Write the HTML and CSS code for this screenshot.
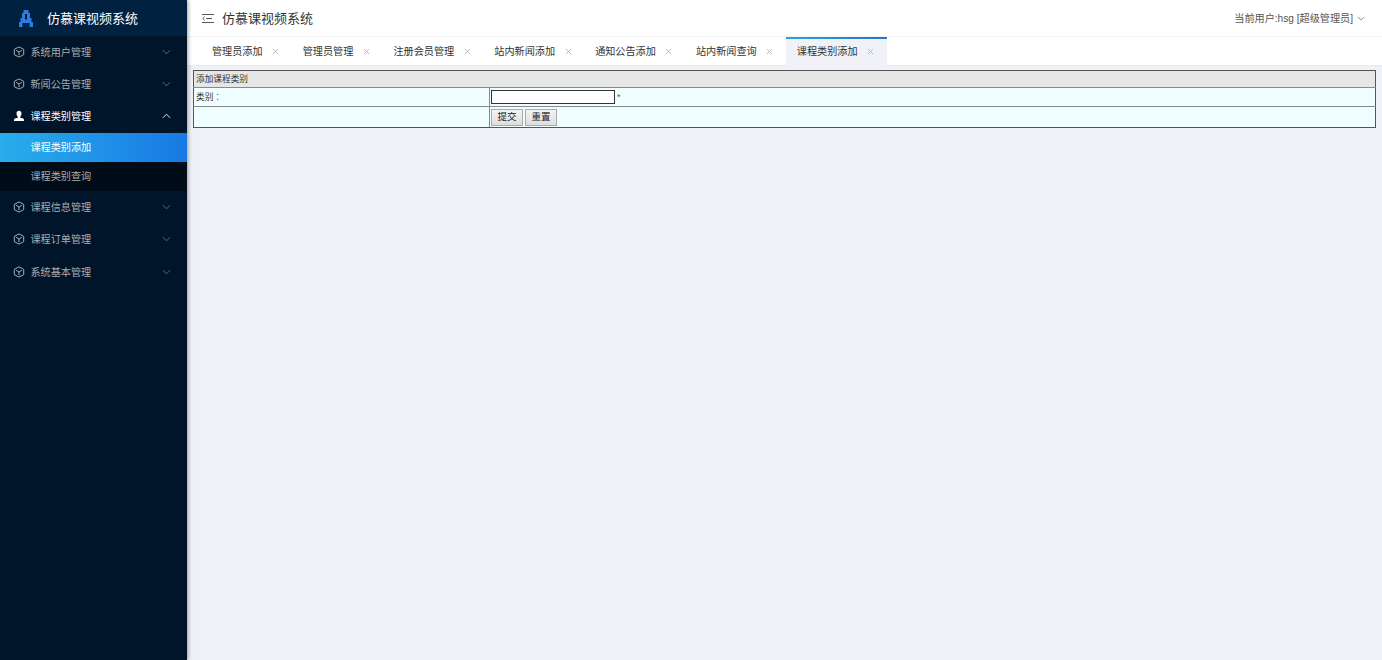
FILE: index.html
```html
<!DOCTYPE html>
<html lang="zh-CN">
<head>
    <meta charset="UTF-8">
    <title>仿慕课视频系统</title>
    <link rel="stylesheet" href="styles.css">
</head>
<body>
    <!-- shared icons -->
    <svg class="defs">
        <symbol id="cube" viewBox="0 0 12 12">
            <path d="M6 .9 10.7 3.3V8.7L6 11.1 1.3 8.7V3.3Z M3.1 4.3 6 6 8.9 4.3 M6 6V9.2"/>
        </symbol>
        <symbol id="down" viewBox="0 0 10 6">
            <path d="M1 1 5 5 9 1"/>
        </symbol>
        <symbol id="close" viewBox="0 0 8 8">
            <path d="M1 1 7 7M7 1 1 7"/>
        </symbol>
    </svg>

    <div class="sidebar">
        <div class="logo">
            <svg class="logo-icon" viewBox="0 0 16 19">
                <path d="M5.5 1H10.5V4H12V9H13.5V13H15V18H11.5V14H4.5V18H1V13H2.5V9H4V4H5.5Z M7 5V10.5H9V5Z" fill-rule="evenodd"/>
            </svg>
            <span>仿慕课视频系统</span>
        </div>
        <ul class="menu">
            <li class="menu-item"><svg class="cube"><use href="#cube"/></svg><span>系统用户管理</span><svg class="arrow"><use href="#down"/></svg></li>
            <li class="menu-item"><svg class="cube"><use href="#cube"/></svg><span>新闻公告管理</span><svg class="arrow"><use href="#down"/></svg></li>
            <li class="menu-item open">
                <svg class="user" viewBox="0 0 12 12"><path d="M6 .8C4.1 .8 3.4 2.2 3.5 3.8 3.6 5.3 4.2 6.2 4.8 6.9V7.8L1.8 8.6C1.2 8.8 1 9.5 1 11H11C11 9.5 10.8 8.8 10.2 8.6L7.2 7.8V6.9C7.8 6.2 8.4 5.3 8.5 3.8 8.6 2.2 7.9 .8 6 .8Z"/></svg>
                <span>课程类别管理</span><svg class="arrow"><use href="#down"/></svg>
            </li>
            <li class="submenu">
                <a class="sub-item active">课程类别添加</a>
                <a class="sub-item">课程类别查询</a>
            </li>
            <li class="menu-item"><svg class="cube"><use href="#cube"/></svg><span>课程信息管理</span><svg class="arrow"><use href="#down"/></svg></li>
            <li class="menu-item"><svg class="cube"><use href="#cube"/></svg><span>课程订单管理</span><svg class="arrow"><use href="#down"/></svg></li>
            <li class="menu-item"><svg class="cube"><use href="#cube"/></svg><span>系统基本管理</span><svg class="arrow"><use href="#down"/></svg></li>
        </ul>
    </div>

    <div class="main">
        <div class="header">
            <svg class="fold" viewBox="0 0 12 10"><path d="M0 1.5H12M4 5.5H10M0 9.5H12M2.7 3.7 .8 5.5 2.7 7.3"/></svg>
            <span class="title">仿慕课视频系统</span>
            <span class="current-user">当前用户:hsg [超级管理员]</span>
            <svg class="user-arrow"><use href="#down"/></svg>
        </div>
        <div class="tabs">
            <div class="tab">管理员添加<svg class="close"><use href="#close"/></svg></div>
            <div class="tab">管理员管理<svg class="close"><use href="#close"/></svg></div>
            <div class="tab">注册会员管理<svg class="close"><use href="#close"/></svg></div>
            <div class="tab">站内新闻添加<svg class="close"><use href="#close"/></svg></div>
            <div class="tab">通知公告添加<svg class="close"><use href="#close"/></svg></div>
            <div class="tab">站内新闻查询<svg class="close"><use href="#close"/></svg></div>
            <div class="tab active">课程类别添加<svg class="close"><use href="#close"/></svg></div>
        </div>
        <form class="content">
            <table class="form-table">
                <colgroup>
                    <col class="col-label">
                    <col>
                </colgroup>
                <tr class="head"><td colspan="2">添加课程类别</td></tr>
                <tr class="row-input">
                    <td>类别<span class="colon" lang="zh-TW">：</span></td>
                    <td><div class="field"><input type="text" class="text"><span class="required">*</span></div></td>
                </tr>
                <tr class="row-buttons">
                    <td></td>
                    <td><div class="field"><button type="button" class="btn">提交</button><button type="reset" class="btn">重置</button></div></td>
                </tr>
            </table>
        </form>
    </div>
</body>
</html>
```

FILE: styles.css
```css
* {
    box-sizing: border-box;
}
body {
    margin: 0;
    height: 660px;
    display: flex;
    overflow: hidden;
    background-color: #f0f1f6;
    font-family: "Liberation Sans", "Noto Sans CJK SC", sans-serif;
    font-size: 10.15px;
    color: #333;
}
svg {
    display: block;
    flex: none;
    fill: none;
    stroke: currentColor;
}
.defs {
    position: absolute;
    width: 0;
    height: 0;
}
.sidebar {
    flex: none;
    width: 187px;
    background-color: #001529;
    box-shadow: 1px 0 4px rgba(0,21,41,0.4);
    z-index: 1;
}
.logo {
    height: 36px;
    padding-left: 18px;
    display: flex;
    align-items: center;
    background-color: #002140;
    color: #fff;
    font-size: 13px;
}
.logo span {
    padding-bottom: 2px;
}
.logo-icon {
    width: 16px;
    height: 19px;
    margin-right: 13px;
    fill: #2b7de0;
    stroke: none;
}
.menu {
    list-style: none;
    margin: 0;
    padding: 0;
}
.menu-item {
    height: 32.4px;
    padding: 0 16px 1px 13px;
    display: flex;
    align-items: center;
    color: #a6adb4;
}
.menu-item span {
    flex: 1;
    padding-bottom: 1px;
}
.cube, .user {
    width: 12px;
    height: 12px;
    margin-right: 5.5px;
}
.user {
    fill: #fff;
    stroke: none;
}
.arrow {
    width: 9px;
    height: 6px;
    color: #667380;
}
.open, .open .arrow {
    color: #fff;
}
.open .arrow {
    transform: rotate(180deg);
}
.submenu {
    background-color: #000c17;
}
.sub-item {
    display: flex;
    align-items: center;
    height: 29px;
    padding: 0 0 2px 30.5px;
    color: #a6adb4;
}
.sub-item.active {
    color: #fff;
    background: linear-gradient(to right, #29adeb, #1879e4);
}
.main {
    flex: 1;
    min-width: 0;
}
.header {
    height: 37px;
    padding: 0 17px 0 15px;
    display: flex;
    align-items: center;
    background-color: #fff;
    border-bottom: 1px solid #f3f3f3;
}
.fold {
    width: 12px;
    height: 10px;
    margin-right: 8px;
    color: #555;
}
.title {
    flex: 1;
    padding-bottom: 2px;
    font-size: 13px;
}
.current-user {
    margin-right: 4px;
    padding-bottom: 2px;
    color: #555;
}
.user-arrow {
    width: 8px;
    height: 5px;
    color: #777;
}
.tabs {
    height: 29px;
    padding-left: 14px;
    display: flex;
    background-color: #fff;
    border-bottom: 1px solid #e8eaf0;
}
.tab {
    display: flex;
    align-items: center;
    height: 29px;
    padding: 0 12.6px 2px 11px;
}
.close {
    width: 7px;
    height: 7px;
    margin: 2px 0 0 9.5px;
    color: #b4b4b4;
}
.tab.active {
    background: linear-gradient(to right, #29a4df, #2475c8) top / 100% 2px no-repeat #f0f2f8;
}
.content {
    padding: 4px 6px 0;
}
.form-table {
    width: 100%;
    table-layout: fixed;
    border-collapse: collapse;
    border: 1px solid #555;
    background-color: #f0feff;
    font-size: 8.67px;
    line-height: 12px;
}
.col-label {
    width: 296px;
}
.form-table td {
    border: 1px solid #858b8b;
    padding: 0 1px 0 2px;
}
.form-table td + td {
    padding-left: 1px;
}
.form-table .head td {
    height: 17px;
    background-color: #e6e6e6;
    border-top-color: #555;
}
.form-table tr td:first-child {
    border-left-color: #555;
}
.form-table tr td:last-child {
    border-right-color: #555;
}
.form-table .row-buttons td {
    border-bottom-color: #555;
}
.colon {
    font-family: "Noto Sans CJK TC", sans-serif;
    line-height: 1;
}
.row-input {
    height: 19px;
}
.row-buttons {
    height: 21px;
}
.field {
    display: flex;
    align-items: center;
}
.text {
    width: 124px;
    height: 14px;
    padding: 0 1px;
    border: 1px solid #333;
    background-color: #fff;
    font-size: 9px;
}
.required {
    margin-left: 2px;
    color: #555;
}
.btn {
    width: 32px;
    height: 17px;
    margin-right: 2px;
    padding: 0;
    border: 1px solid #aaa;
    background: linear-gradient(#f4f4f4, #dedede);
    font-family: inherit;
    font-size: 9.5px;
    line-height: 14px;
    color: #222;
}
```
